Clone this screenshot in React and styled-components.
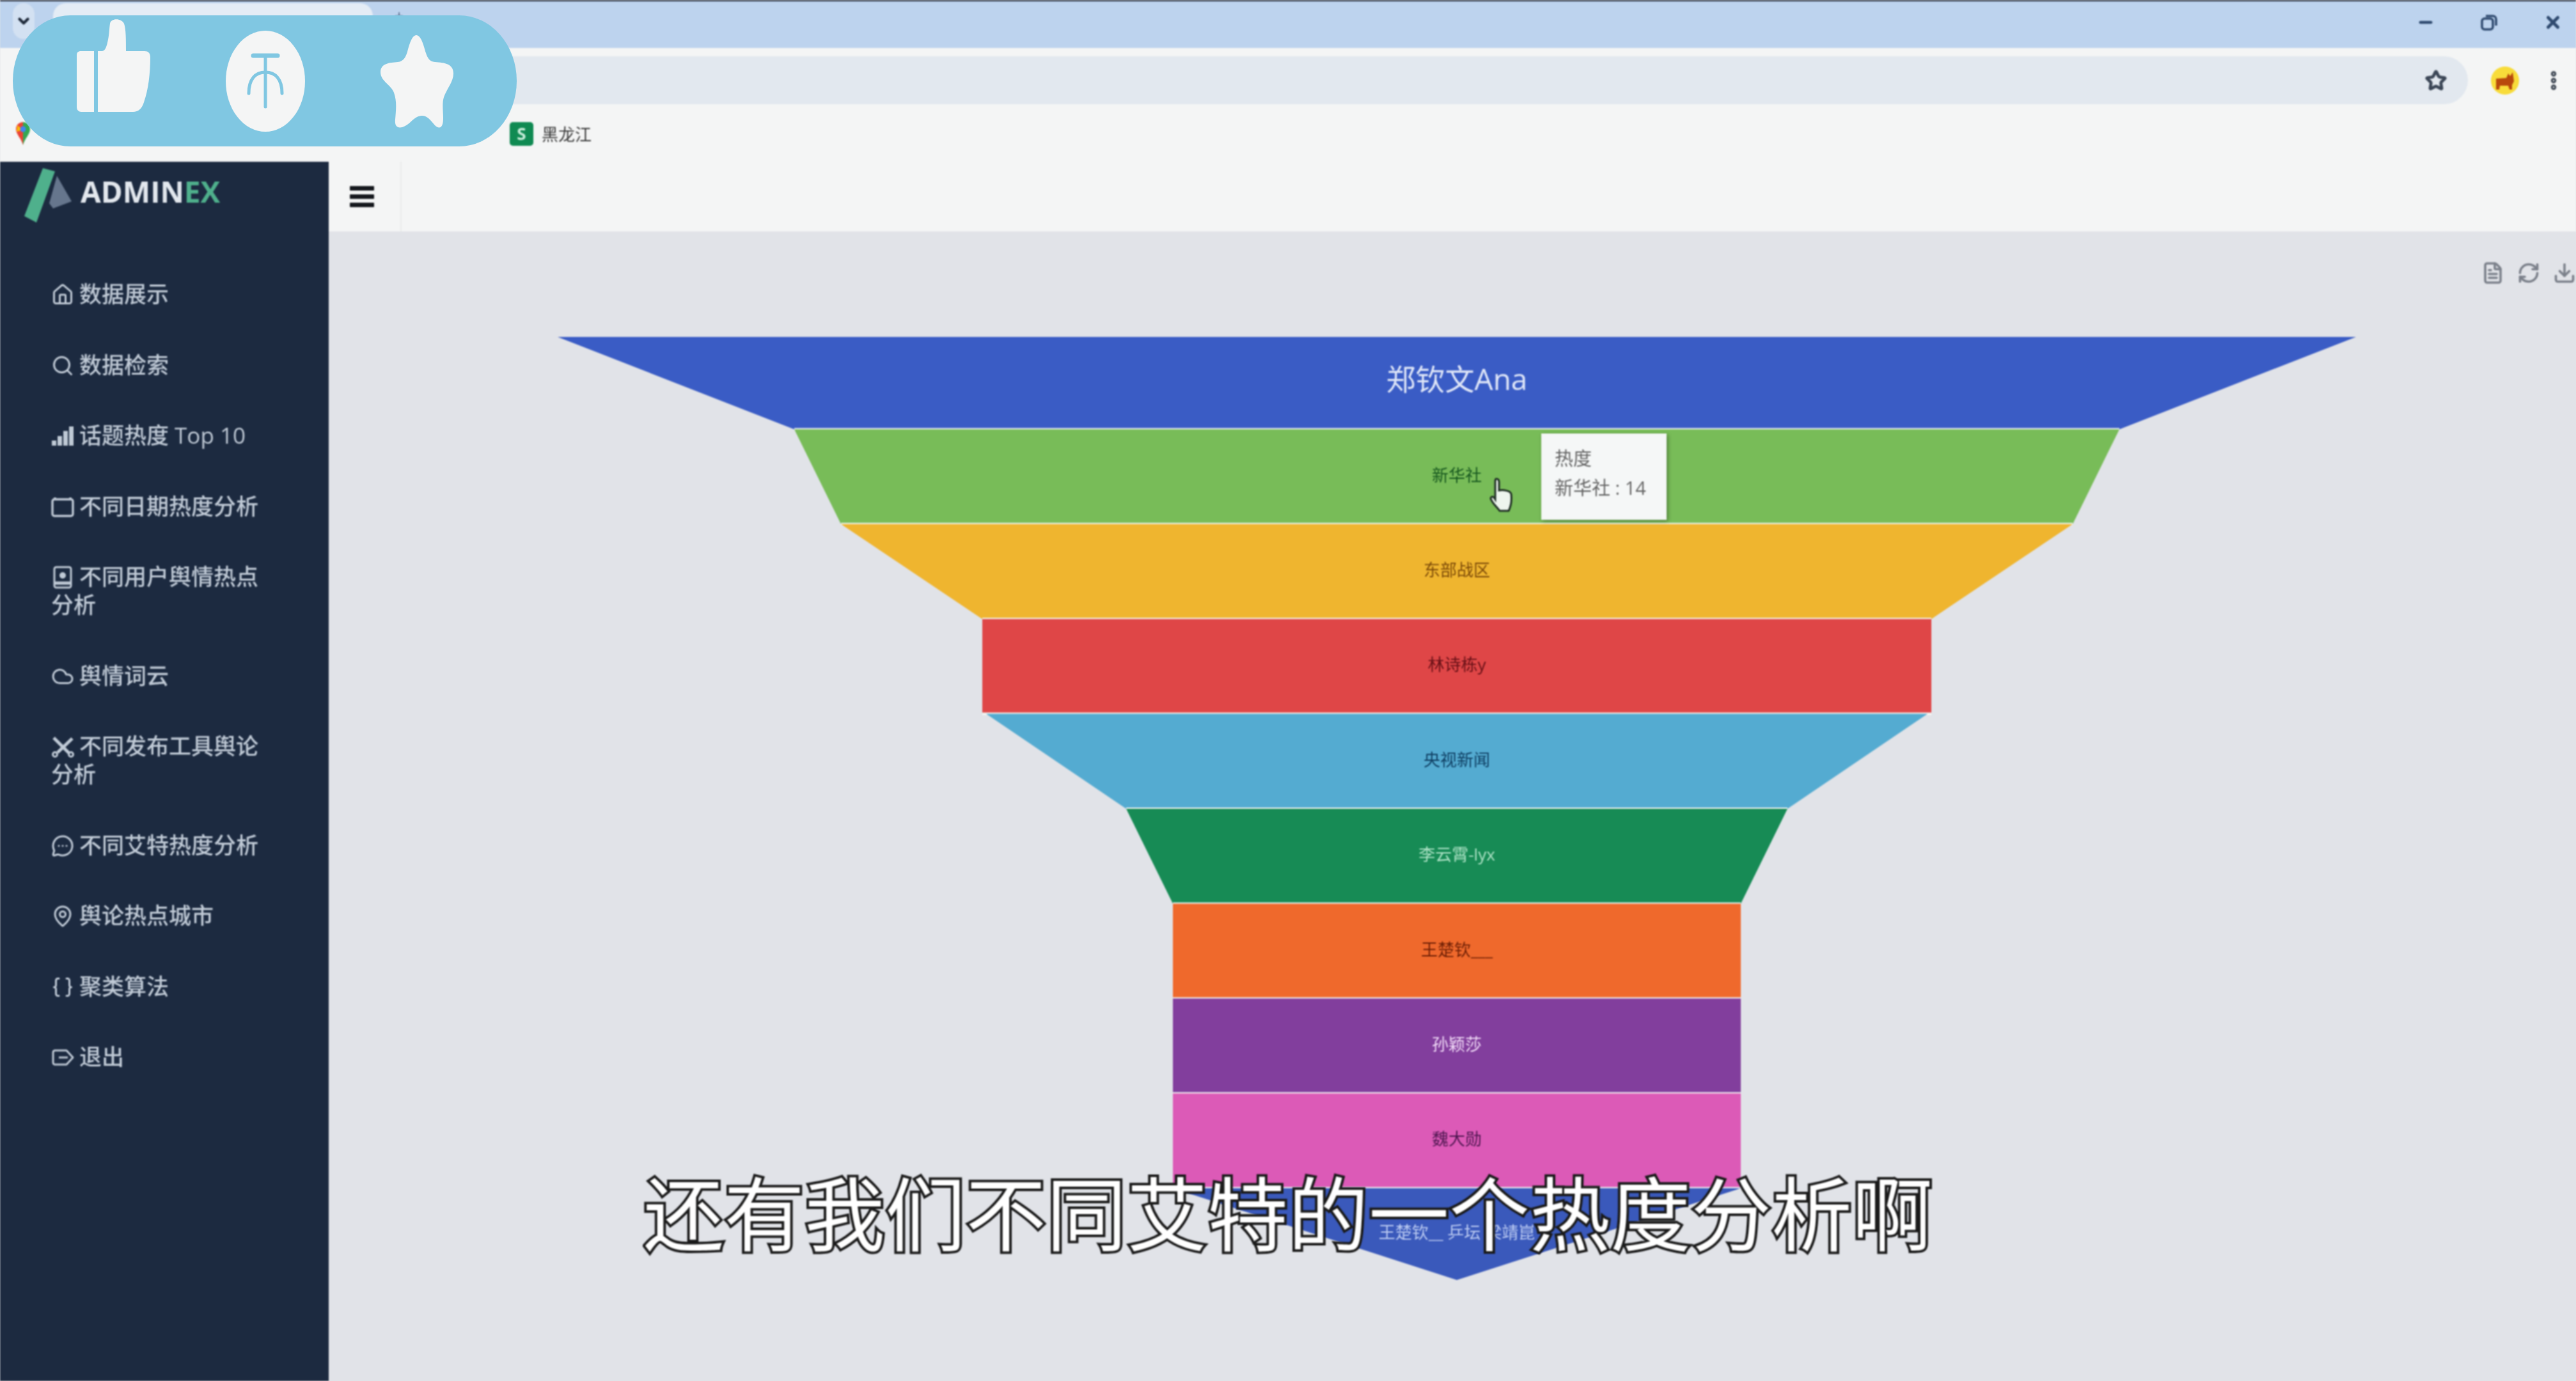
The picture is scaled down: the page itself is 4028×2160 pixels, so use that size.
import React from "react";
import styled, { createGlobalStyle } from "styled-components";
import { House, Search, Cloud, MessageCircleMore, MapPin, Braces, Star, X, Minus, FileText, RefreshCw, Download, ChevronDown, Plus, EllipsisVertical } from "lucide-react";

const GlobalStyle = createGlobalStyle`
  html, body { margin: 0; padding: 0; background: #e1e3e8; }
  * { box-sizing: border-box; }
  body { font-family: "Open Sans", "Noto Sans CJK SC", sans-serif; }
`;

const Page = styled.div`
  position: relative;
  width: 4028px;
  height: 2160px;
  overflow: hidden;
`;

const Screen = styled.div`
  display: flex;
  flex-direction: column;
  height: 100%;
  filter: blur(1.1px);
`;

const TabStrip = styled.div`
  flex: none;
  height: 75px;
  display: flex;
  align-items: flex-start;
  background: #bdd3ee;
  border-top: 2px solid #1b2230;
  color: #2f4a6f;
`;

const TabMenu = styled.div`
  width: 34px;
  height: 56px;
  margin: 3px 0 0 20px;
  border-radius: 17px;
  background: #d3e1f2;
  display: flex;
  align-items: center;
  justify-content: center;
  color: #1f2a3a;
`;

const Tab = styled.div`
  width: 500px;
  height: 71px;
  margin: 3px 0 0 29px;
  border-radius: 20px 20px 0 0;
  background: #e4ecf5;
`;

const NewTab = styled.div`
  margin: 14px 0 0 32px;
  color: #46597a;
`;

const WindowButtons = styled.div`
  margin-left: auto;
  height: 66px;
  display: flex;
  align-items: center;
  gap: 72px;
  padding-right: 21px;
`;

const Toolbar = styled.div`
  flex: none;
  height: 90px;
  display: flex;
  align-items: center;
  padding: 11px 0 0 230px;
  background: #f4f5f5;
`;

const AddressBar = styled.div`
  flex: 1;
  height: 75px;
  display: flex;
  align-items: center;
  justify-content: flex-end;
  padding-right: 33px;
  border-radius: 38px;
  background: #e2e8ef;
  color: #3b4656;
`;

const Avatar = styled.div`
  width: 44px;
  height: 44px;
  margin-left: 36px;
  border-radius: 50%;
  background: #f8dc3a;
  display: flex;
  align-items: center;
  justify-content: center;
`;

const MenuDots = styled.div`
  width: 40px;
  margin: 0 15px 0 34px;
  display: flex;
  justify-content: center;
  color: #39424f;
`;

const Bookmarks = styled.div`
  flex: none;
  height: 88px;
  display: flex;
  align-items: center;
  padding-left: 24px;
  background: #f4f5f5;
`;

const SheetIcon = styled.div`
  width: 37px;
  height: 37px;
  margin: 0 13px 0 749px;
  border-radius: 5px;
  background: #0f8a52;
  color: #c9eedb;
  font-size: 26px;
  font-weight: 700;
  line-height: 37px;
  text-align: center;
`;

const BookmarkLabel = styled.span`
  font-size: 26px;
  color: #3a3a3a;
`;

const Body = styled.div`
  flex: 1;
  display: flex;
  min-height: 0;
`;

const Sidebar = styled.aside`
  flex: none;
  width: 514px;
  background: #1c2a40;
`;

const Brand = styled.div`
  height: 152px;
  display: flex;
  align-items: flex-start;
  padding: 8px 0 0 36px;
  gap: 10px;
`;

const BrandText = styled.div`
  margin-top: 8px;
  font-size: 46px;
  font-weight: 700;
  line-height: 60px;
  color: #e3e8ee;
`;

const BrandAccent = styled.span`
  color: #4fb08c;
`;

const NavItem = styled.div`
  width: 430px;
  padding: 33.25px 0 33.25px 80px;
  font-size: 35px;
  font-weight: 500;
  line-height: 44px;
  color: #c0cad6;

  svg {
    display: inline-block;
    width: 36px;
    height: 36px;
    margin-right: 8px;
    vertical-align: -6px;
  }
`;

const Main = styled.main`
  flex: 1;
  display: flex;
  flex-direction: column;
  min-width: 0;
`;

const TopBar = styled.header`
  flex: none;
  height: 109px;
  display: flex;
  align-items: center;
  background: #f4f5f5;
`;

const MenuButton = styled.div`
  width: 114px;
  height: 100%;
  padding-left: 33px;
  display: flex;
  flex-direction: column;
  justify-content: center;
  gap: 6px;
  border-right: 2px solid #e9eaea;
`;

const MenuBar = styled.span`
  width: 38px;
  height: 7px;
  border-radius: 1px;
  background: #15181d;
`;

const Content = styled.section`
  position: relative;
  flex: 1;
  padding-top: 47px;
  background: #e1e3e8;
`;

const Toolbox = styled.div`
  height: 38px;
  margin-bottom: 73px;
  display: flex;
  justify-content: flex-end;
  gap: 20px;
  color: #7b808a;
`;

const Chart = styled.svg`
  display: block;
  width: 3514px;
  height: 1500px;
`;

const Tooltip = styled.div`
  position: absolute;
  left: 1896px;
  top: 316px;
  width: 196px;
  height: 135px;
  padding: 16px 21px;
  background: #f5f7f7;
  box-shadow: 2px 2px 6px rgba(0, 0, 0, 0.35);
  font-size: 29px;
  line-height: 46px;
  white-space: nowrap;
  color: #666;
`;

const HandCursor = styled.svg`
  position: absolute;
  left: 1814px;
  top: 384px;
  width: 38px;
  height: 56px;
`;

const RatingPill = styled.div`
  position: absolute;
  left: 20px;
  top: 24px;
  width: 788px;
  height: 205px;
  display: flex;
  align-items: flex-start;
  gap: 118px;
  padding-left: 100px;
  border-radius: 90px / 50%;
  background: #80c7e2;
`;

const PillIcon = styled.svg`
  flex: none;
  margin-top: ${(p) => p.$top}px;
  fill: #f4f5f5;
`;

const Subtitle = styled.div`
  position: absolute;
  left: 0;
  right: 0;
  top: 1817px;
  font-family: "Noto Sans CJK SC", sans-serif;
  font-size: 126px;
  font-weight: 400;
  line-height: 150px;
  text-align: center;
  white-space: nowrap;
  color: #fff;
  -webkit-text-stroke: 8px #1a1a1a;
  paint-order: stroke fill;
  filter: blur(0.8px);
`;

// half widths of the funnel, measured from its centre line
const rows = [
  { name: "郑钦文Ana", color: "#3a5cc5", ink: "#dfe6f8", top: 1406, bottom: 1036, size: 46 },
  { name: "新华社", color: "#78bc58", ink: "#17581f", top: 1036, bottom: 963 },
  { name: "东部战区", color: "#efb52f", ink: "#7c4a08", top: 963, bottom: 742 },
  { name: "林诗栋y", color: "#df4647", ink: "#661016", top: 742, bottom: 742 },
  { name: "央视新闻", color: "#54abd1", ink: "#0f3f63", top: 736, bottom: 517 },
  { name: "李云霄-lyx", color: "#178b55", ink: "#aee3c6", top: 517, bottom: 444 },
  { name: "王楚钦___", color: "#ef692c", ink: "#6e1f05", top: 444, bottom: 444 },
  { name: "孙颖莎", color: "#823e9d", ink: "#f2dcf8", top: 444, bottom: 444 },
  { name: "魏大勋", color: "#dc5ab7", ink: "#4d1650", top: 444, bottom: 444 },
  { name: "王楚钦__ 乒坛 梁靖崑", color: "#3a59bb", ink: "#bccbf2", top: 444, bottom: 0 },
];

const CX = 1764;
const ROW_H = 148.4;

function Funnel() {
  return (
    <Chart viewBox="0 0 3514 1500">
      {rows.map((r, i) => {
        const y0 = 3 + i * ROW_H + (i === 0 ? 4 : 0);
        const y1 = 3 + (i + 1) * ROW_H - (i === 9 ? 5 : 0);
        return (
          <g key={r.name}>
            <polygon
              points={`${CX - r.top},${y0} ${CX + r.top},${y0} ${CX + r.bottom},${y1} ${CX - r.bottom},${y1}`}
              fill={r.color}
            />
            {i < 9 && (
              <line x1={CX - r.bottom} x2={CX + r.bottom} y1={y1} y2={y1} stroke="#f2f5f2" strokeWidth="4" />
            )}
            <text
              x={CX}
              y={i === 9 ? 1410 : (y0 + y1) / 2 + (r.size ? -2 : 0)}
              textAnchor="middle"
              dominantBaseline="middle"
              fontSize={r.size || 26}
              fontFamily='"Open Sans", "Noto Sans CJK SC", sans-serif'
              fill={r.ink}
            >
              {r.name}
            </text>
          </g>
        );
      })}
    </Chart>
  );
}

const BarsIcon = () => (
  <svg viewBox="0 0 36 36" fill="currentColor">
    <rect x="1" y="25" width="7" height="8" />
    <rect x="10" y="18" width="7" height="15" />
    <rect x="19" y="10" width="7" height="23" />
    <rect x="28" y="3" width="7" height="30" />
  </svg>
);

const CalendarIcon = () => (
  <svg viewBox="0 0 36 36" fill="none" stroke="currentColor" strokeWidth="3.4">
    <rect x="2" y="6" width="32" height="26" rx="3" />
    <path d="M6 3v4M30 3v4" />
  </svg>
);

const ProfileIcon = () => (
  <svg viewBox="0 0 36 36" fill="none" stroke="currentColor" strokeWidth="3">
    <rect x="5" y="2" width="26" height="32" rx="3" />
    <circle cx="18" cy="15" r="5" fill="currentColor" stroke="none" />
    <path d="M5 27h26" strokeWidth="5" />
  </svg>
);

const ToolsIcon = () => (
  <svg viewBox="0 0 36 36" fill="none" stroke="currentColor" strokeWidth="5">
    <path d="M4 4l24 24M33 5L10 27" />
    <circle cx="6" cy="30" r="3.5" strokeWidth="3" />
    <circle cx="31" cy="30" r="3.5" strokeWidth="3" />
  </svg>
);

const ExitIcon = () => (
  <svg viewBox="0 0 36 36" fill="none" stroke="currentColor" strokeWidth="3">
    <path d="M24 7H6a3 3 0 0 0-3 3v16a3 3 0 0 0 3 3h18l10-11z" strokeLinejoin="round" />
    <path d="M12 18h14" />
  </svg>
);

const navItems = [
  { icon: <House />, label: "数据展示" },
  { icon: <Search />, label: "数据检索" },
  { icon: <BarsIcon />, label: "话题热度 Top 10" },
  { icon: <CalendarIcon />, label: "不同日期热度分析" },
  { icon: <ProfileIcon />, label: "不同用户舆情热点分析" },
  { icon: <Cloud />, label: "舆情词云" },
  { icon: <ToolsIcon />, label: "不同发布工具舆论分析" },
  { icon: <MessageCircleMore />, label: "不同艾特热度分析" },
  { icon: <MapPin />, label: "舆论热点城市" },
  { icon: <Braces />, label: "聚类算法" },
  { icon: <ExitIcon />, label: "退出" },
];

const RestoreIcon = () => (
  <svg width="26" height="26" viewBox="0 0 26 26" fill="none" stroke="currentColor" strokeWidth="3.5">
    <rect x="2" y="7" width="17" height="17" rx="4" />
    <path d="M8 3h11a5 5 0 0 1 5 5v10" />
  </svg>
);

const Logo = () => (
  <svg width="80" height="92" viewBox="0 0 80 92">
    <polygon points="31,2 50,7 21,87 2,77" fill="#4fb08c" />
    <polygon points="53,14 76,54 47,65 41,57" fill="#66768d" />
  </svg>
);

const MapsPin = () => (
  <svg width="24" height="38" viewBox="0 0 24 38">
    <path d="M12 1C5 1 1 6 1 12c0 8 8 14 11 25z" fill="#ea4335" />
    <path d="M12 1c7 0 11 5 11 11 0 8-8 14-11 25z" fill="#34a853" />
    <path d="M3 6l9 7-10 3z" fill="#fbbc04" />
    <circle cx="12" cy="12" r="4.5" fill="#4285f4" />
  </svg>
);

const Corgi = () => (
  <svg width="32" height="30" viewBox="0 0 32 30" fill="#b8480c">
    <path d="M2 12l16-1 3-7 3 4 4-6 2 14-3 6v7h-4l-2-6H8l-1 6H2z" />
  </svg>
);

export default function App() {
  return (
    <Page>
      <GlobalStyle />
      <Screen>
        <TabStrip>
          <TabMenu>
            <ChevronDown size={26} strokeWidth={4} />
          </TabMenu>
          <Tab />
          <NewTab>
            <Plus size={18} />
          </NewTab>
          <WindowButtons>
            <Minus size={28} strokeWidth={4} />
            <RestoreIcon />
            <X size={30} strokeWidth={4} />
          </WindowButtons>
        </TabStrip>
        <Toolbar>
          <AddressBar>
            <Star size={34} strokeWidth={3.4} />
          </AddressBar>
          <Avatar>
            <Corgi />
          </Avatar>
          <MenuDots>
            <EllipsisVertical size={36} strokeWidth={3.6} />
          </MenuDots>
        </Toolbar>
        <Bookmarks>
          <MapsPin />
          <SheetIcon>S</SheetIcon>
          <BookmarkLabel>黑龙江</BookmarkLabel>
        </Bookmarks>
        <Body>
          <Sidebar>
            <Brand>
              <Logo />
              <BrandText>
                ADMIN<BrandAccent>EX</BrandAccent>
              </BrandText>
            </Brand>
            {navItems.map((item) => (
              <NavItem key={item.label}>
                {item.icon}
                {item.label}
              </NavItem>
            ))}
          </Sidebar>
          <Main>
            <TopBar>
              <MenuButton>
                <MenuBar />
                <MenuBar />
                <MenuBar />
              </MenuButton>
            </TopBar>
            <Content>
              <Toolbox>
                <FileText size={36} strokeWidth={2.4} />
                <RefreshCw size={36} strokeWidth={2.4} />
                <Download size={36} strokeWidth={2.4} />
              </Toolbox>
              <Funnel />
              <HandCursor viewBox="0 0 38 56">
                <path
                  d="M12 3c3 0 4 2 4 5v13c6-1 18 0 19 6 1 9 0 18-4 26H17C12 46 6 42 3 34c0-3 3-4 5-2l2 3V8c0-3 0-5 2-5z"
                  fill="#eef5ee"
                  stroke="#1f2f24"
                  strokeWidth="3"
                />
              </HandCursor>
              <Tooltip>
                <div>热度</div>
                <div>新华社 : 14</div>
              </Tooltip>
            </Content>
          </Main>
        </Body>
      </Screen>
      <Subtitle>还有我们不同艾特的一个热度分析啊</Subtitle>
      <RatingPill>
        <PillIcon $top={6} width="115" height="145" viewBox="0 0 115 145">
          <path d="M5 50h22v95H7a7 7 0 0 1-7-7V56a6 6 0 0 1 5-6z" />
          <path d="M33 145V50h7c5-1 7-8 9-18 2-9 2-20 3-25 1-9 18-9 22 0 3 8 3 26 3 43h29c6 0 9 3 9 10 0 25-3 50-10 70-3 10-9 15-17 15z" />
        </PillIcon>
        <PillIcon $top={24} width="124" height="158" viewBox="0 0 124 158">
          <ellipse cx="62" cy="79" rx="62" ry="79" />
          <g fill="none" stroke="#80c7e2" strokeWidth="5" strokeLinecap="round">
            <path d="M43 39h38" strokeWidth="7" />
            <path d="M62 39v80" />
            <path d="M36 98c0-22 10-33 26-33s26 11 26 33" />
          </g>
        </PillIcon>
        <PillIcon $top={31} width="114" height="145" viewBox="0 0 114 145">
          <path d="M56 0c7 0 11 14 15 28 3 9 6 13 14 14 16 1 29 3 29 18 0 13-10 23-15 37-4 13 1 32-2 42-2 7-7 7-12 2-9-10-14-19-28-13-8 4-13 13-23 16-8 2-12-2-11-12 1-14 3-28-2-42C17 78 0 72 0 58c0-14 14-15 27-16 9-1 12-7 15-16 3-11 7-26 14-26z" />
        </PillIcon>
      </RatingPill>
    </Page>
  );
}
